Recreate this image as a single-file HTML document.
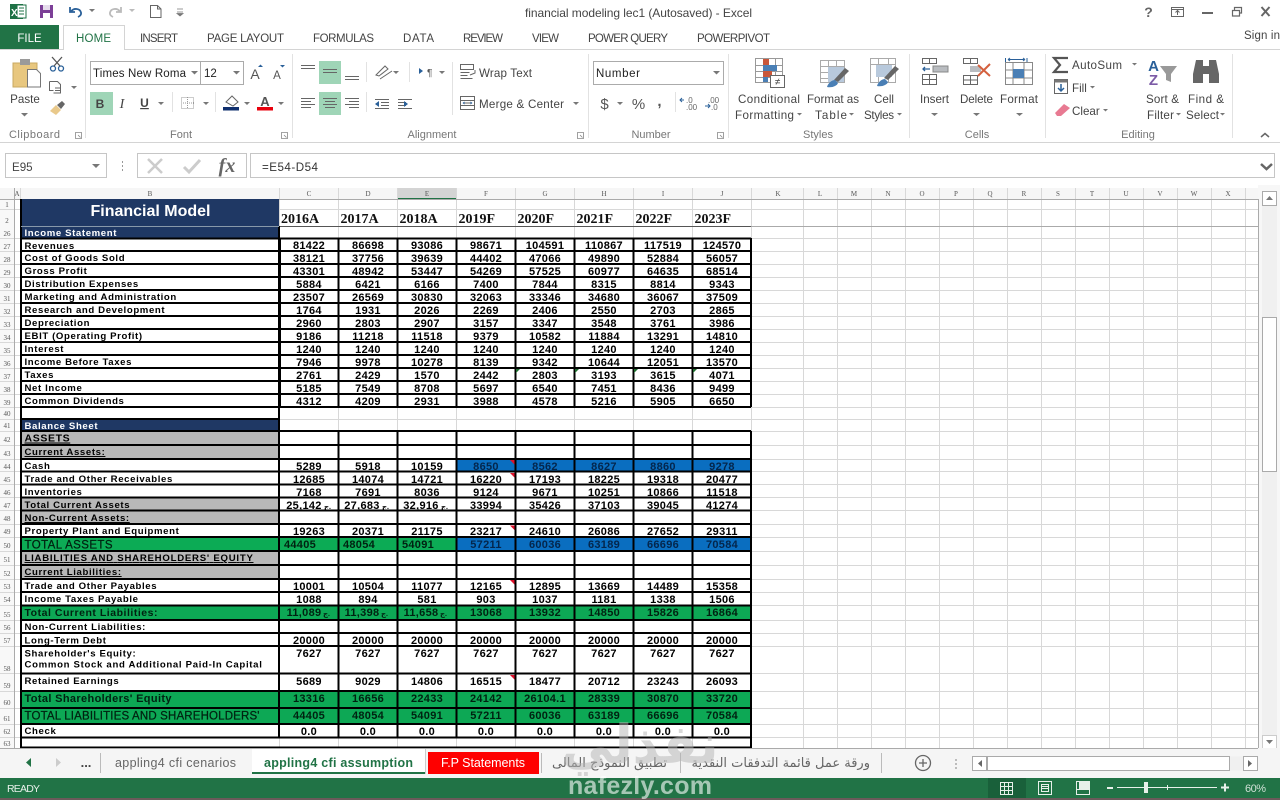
<!DOCTYPE html>
<html><head><meta charset="utf-8"><title>financial modeling lec1 (Autosaved) - Excel</title>
<style>
html,body{margin:0;padding:0;background:#fff;width:1280px;height:800px;overflow:hidden}
svg{display:block;position:absolute;left:0;top:0}
text{font-family:"Liberation Sans","DejaVu Sans",sans-serif;white-space:pre}
.t{font-size:11.5px;fill:#444}
.r{font-size:11.6px;fill:#444}
.g{font-size:11px;fill:#777;text-anchor:middle}
.c{text-anchor:middle}
.hd{font-family:"Liberation Serif",serif;font-size:7px;fill:#555;text-anchor:middle}
.l{font-size:9.6px;font-weight:bold;fill:#000;letter-spacing:.62px}
.n{font-size:11px;font-weight:bold;fill:#000;text-anchor:middle;letter-spacing:.3px}
.y{font-family:"Liberation Serif",serif;font-size:14px;font-weight:bold;fill:#111}
.ic{fill:none;stroke:#666;stroke-width:1}
</style></head><body>
<svg width="1280" height="800" viewBox="0 0 1280 800" xmlns="http://www.w3.org/2000/svg">
<rect width="1280" height="800" fill="#fff"/>

<!-- Quick access bar -->
<rect x="10" y="4" width="13" height="15" fill="#1e7145"/><rect x="17" y="5" width="9" height="13" fill="#fff" stroke="#1e7145"/>
<path d="M19 8h5M19 11h5M19 14h5" stroke="#1e7145"/>
<text x="11" y="16" style="font-size:10px;font-weight:bold;fill:#fff">X</text>
<rect x="40" y="5" width="13" height="13" fill="#7c3f97"/><rect x="43" y="5" width="7" height="5" fill="#e6dcec"/><rect x="43" y="13" width="7" height="5" fill="#fff"/>
<path d="M70 7v5h5M71 11.500c3-4 9-3 10 1 .5 2-1 3.500-3 4.500" fill="none" stroke="#2a6099" stroke-width="1.800"/>
<path d="M89 9l3 3 3-3z" fill="#777"/>
<path d="M121 7v5h-5M120 11.500c-3-4-9-3-10 1-.5 2 1 3.500 3 4.500" fill="none" stroke="#bbb" stroke-width="1.800"/>
<path d="M129 9l3 3 3-3z" fill="#bbb"/>
<path d="M150.500 5.500h7l3.500 3.500v8.500h-10.500z M157.500 5.500v3.500h3.500" fill="#fff" stroke="#666"/>
<path d="M177 9h6M177 12h6M180 16l-3-2.500h6z" stroke="#777" fill="#777" stroke-width=".8"/>
<text x="638.500" y="17" class="c" style="font-size:12px;fill:#444" textLength="227">financial modeling lec1 (Autosaved) - Excel</text>

<!-- Window controls -->
<text x="1148.500" y="17" class="c" style="font-size:14px;font-weight:bold;fill:#666">?</text>
<rect x="1171.500" y="7.500" width="12" height="9" fill="none" stroke="#666"/><path d="M1171.500 9.500h12M1177.500 15v-4M1175.500 12.500l2-2 2 2" fill="none" stroke="#666"/>
<rect x="1202" y="12" width="11" height="2" fill="#666"/>
<path d="M1232.500 10.500h7v5.500h-7zM1234.500 10.500v-3h7v5.500h-2" fill="none" stroke="#666" stroke-width="1.200"/>
<path d="M1261.500 7l8 9M1269.500 7l-8 9" stroke="#666" stroke-width="2"/>

<!-- Tabs -->
<rect x="0" y="25" width="59" height="25" fill="#217346"/>
<text x="29.500" y="42" class="c" style="font-size:11.500px;fill:#fff">FILE</text>
<path d="M0 49.500H1280" stroke="#d4d4d4"/>
<path d="M63.500 50V25.500H124.500V50" fill="#fff" stroke="#d4d4d4"/><rect x="64" y="48" width="60" height="3" fill="#fff"/>
<text x="76" y="42" class="t" style="fill:#217346" textLength="35">HOME</text>
<text x="140" y="42" class="t" textLength="38">INSERT</text>
<text x="207" y="42" class="t" textLength="77">PAGE LAYOUT</text>
<text x="313" y="42" class="t" textLength="61">FORMULAS</text>
<text x="403" y="42" class="t" textLength="31">DATA</text>
<text x="463" y="42" class="t" textLength="40">REVIEW</text>
<text x="532" y="42" class="t" textLength="27">VIEW</text>
<text x="588" y="42" class="t" textLength="80">POWER QUERY</text>
<text x="697" y="42" class="t" textLength="73">POWERPIVOT</text>
<text x="1244" y="39" class="t" textLength="36">Sign in</text>

<!-- Ribbon separators -->
<path d="M85.500 54V138M292.500 54V138M588.500 54V138M728.500 54V138M909.500 54V138M1045.500 54V138M1232.500 54V138" stroke="#e2e2e2"/>
<path d="M172.500 92V112M215.500 92V112M366.500 62V82M366.500 92V112M409.500 62V82M452.500 62V115M675.500 92V112" stroke="#e2e2e2"/>
<path d="M0 142.500H1280" stroke="#d4d4d4"/>

<!-- Clipboard -->
<rect x="13" y="63" width="24" height="24" fill="#e8c77f" stroke="#c9a860"/>
<rect x="20" y="59" width="10" height="6" fill="#9a9a9a"/>
<path d="M27.500 69.500h9l4 4v13.500h-13z" fill="#fff" stroke="#777"/>
<text x="25" y="103" class="c r">Paste</text>
<path d="M21 113l3.500 3.500 3.500-3.500z" fill="#777"/>
<circle cx="53" cy="68.500" r="2.500" fill="none" stroke="#2a6099" stroke-width="1.300"/><circle cx="61" cy="68.500" r="2.500" fill="none" stroke="#2a6099" stroke-width="1.300"/>
<path d="M54 66L62 57M60 66L52 57" stroke="#555" stroke-width="1.300"/>
<path d="M49.500 81.500h8l3 3v8.500h-7M49.500 81.500v9h4" fill="#fff" stroke="#666"/><path d="M55 88h5M55 90.500h5" stroke="#666"/>
<path d="M71 86l3 3 3-3z" fill="#777"/>
<path d="M50 111l6-6 5 5-5 5z" fill="#e9c98b"/><path d="M57 105l5-4 3 3-4 5z" fill="#666"/>
<text x="9" y="138" class="g" style="text-anchor:start" textLength="51">Clipboard</text>
<path d="M75.500 132.500h6v6h-6zM78 135l2.500 2.500" fill="none" stroke="#888" stroke-width=".8"/>

<!-- Font -->
<rect x="90.500" y="61.500" width="110" height="23" fill="#fff" stroke="#ababab"/>
<rect x="200.500" y="61.500" width="43" height="23" fill="#fff" stroke="#ababab"/>
<text x="93" y="77" class="t" style="fill:#222" textLength="93">Times New Roma</text>
<path d="M191 71l3.500 3.500 3.500-3.500z" fill="#777"/>
<text x="204" y="77" class="t" style="fill:#222">12</text>
<path d="M233 71l3.500 3.500 3.500-3.500z" fill="#777"/>
<text x="255" y="79" class="c" style="font-size:14px;fill:#555">A</text><path d="M258 67l2.500-2.500 2.500 2.500z" fill="#2a6099"/>
<text x="277" y="79" class="c" style="font-size:11.500px;fill:#555">A</text><path d="M280 65l2.500 2.500 2.500-2.500z" fill="#2a6099"/>
<rect x="90" y="92" width="23" height="23" fill="#9fd5b7"/>
<text x="100" y="108" class="c" style="font-size:12px;font-weight:bold;fill:#444">B</text>
<text x="122" y="108" class="c" style="font-size:14px;font-style:italic;font-family:'Liberation Serif',serif;fill:#444">I</text>
<text x="144.500" y="107" class="c" style="font-size:12px;font-weight:bold;fill:#444;text-decoration:underline">U</text>
<path d="M158 102l3 3 3-3z" fill="#777"/>
<rect x="181.500" y="97.500" width="12" height="11" fill="none" stroke="#999" stroke-dasharray="1 1"/><path d="M187.500 97v12M181 103h13" stroke="#999" stroke-dasharray="1 1"/>
<path d="M203 102l3 3 3-3z" fill="#777"/>
<path d="M226 102l6-6 6 6-5 4z" fill="#fff" stroke="#666"/><rect x="223" y="107" width="16" height="3.500" fill="#0f2f6e"/>
<path d="M244 102l3 3 3-3z" fill="#777"/>
<text x="265" y="106" class="c" style="font-size:13px;font-weight:bold;fill:#555">A</text><rect x="257" y="107" width="16" height="3.500" fill="#e8000d"/>
<path d="M278 102l3 3 3-3z" fill="#777"/>
<text x="181" y="138" class="g">Font</text>
<path d="M281.500 132.500h6v6h-6zM284 135l2.500 2.500" fill="none" stroke="#888" stroke-width=".8"/>

<!-- Alignment -->
<rect x="319" y="61" width="22" height="23" fill="#9fd5b7"/><rect x="319" y="92" width="22" height="23" fill="#9fd5b7"/>
<path d="M301 65.500h14M301 68.500h14M323 69.500h14M323 72.500h14M345 76.500h14M345 79.500h14" stroke="#666"/>
<path d="M301 98.500h14M301 101.500h10M301 104.500h14M301 107.500h10M323 98.500h14M325 101.500h10M323 104.500h14M325 107.500h10M345 98.500h14M349 101.500h10M345 104.500h14M349 107.500h10" stroke="#666"/>
<path d="M376 75l9-9 3 3-9 7z M380 79l12-8" fill="none" stroke="#666"/><path d="M393 71l3 3 3-3z" fill="#777"/>
<path d="M375 99.500h14M381 102.500h8M381 105.500h8M375 108.500h14" fill="none" stroke="#666"/><path d="M375 104l4-3v6z" fill="#2a6099"/>
<path d="M398 99.500h14M398 102.500h8M398 105.500h8M398 108.500h14" fill="none" stroke="#666"/><path d="M408 104l-4-3v6z" fill="#2a6099"/>
<path d="M419 68l4 3-4 3z" fill="#2a6099"/>
<text x="427" y="76" style="font-size:10px;fill:#555">¶</text><path d="M439 71l3 3 3-3z" fill="#777"/>
<rect x="460.500" y="64.500" width="13" height="5" fill="none" stroke="#666"/><path d="M460.500 72.500h9M460.500 75.500h7M460.500 78.500h12M475 70v3l-5 2" fill="none" stroke="#666"/>
<text x="479" y="77" class="r" textLength="53">Wrap Text</text>
<rect x="460.500" y="96.500" width="14" height="13" fill="none" stroke="#666"/><path d="M460.500 100.500h14M460.500 105.500h14M464 103h7" stroke="#666"/><path d="M462.500 103l2-1.500v3zM472.500 103l-2-1.500v3z" fill="#2a6099"/>
<text x="479" y="108" class="r" textLength="85">Merge &amp; Center</text>
<path d="M573 102l3 3 3-3z" fill="#777"/>
<text x="432" y="138" class="g">Alignment</text>
<path d="M577.500 132.500h6v6h-6zM580 135l2.500 2.500" fill="none" stroke="#888" stroke-width=".8"/>

<!-- Number -->
<rect x="593.500" y="61.500" width="130" height="23" fill="#fff" stroke="#ababab"/>
<text x="596" y="77" class="t" style="fill:#222" textLength="44">Number</text>
<path d="M713 71l3.500 3.500 3.500-3.500z" fill="#777"/>
<text x="604.500" y="109" class="c" style="font-size:15px;fill:#555">$</text>
<path d="M617 102l3 3 3-3z" fill="#777"/>
<text x="638.500" y="109" class="c" style="font-size:15px;fill:#555">%</text>
<text x="659.500" y="106" class="c" style="font-size:15px;font-weight:bold;fill:#555">,</text>
<text x="686" y="103" style="font-size:8px;fill:#666">.0</text><text x="686" y="110" style="font-size:8px;fill:#666">.00</text>
<path d="M684 100h-4M682 98l-2 2 2 2" fill="none" stroke="#2a6099"/>
<text x="708" y="103" style="font-size:8px;fill:#666">.00</text><text x="711" y="110" style="font-size:8px;fill:#666">.0</text>
<path d="M705 106h5M708 104l2 2-2 2" fill="none" stroke="#2a6099"/>
<text x="651" y="138" class="g">Number</text>
<path d="M717.500 132.500h6v6h-6zM720 135l2.500 2.500" fill="none" stroke="#888" stroke-width=".8"/>

<!-- Styles -->
<path d="M755.500 58.500h27v24h-27zM755.500 65.500h27M755.500 71.500h27M755.500 77.500h27M763.500 58.500v24M775.500 58.500v24" fill="#fff" stroke="#999"/>
<rect x="763" y="59" width="6" height="6" fill="#c9573a"/><rect x="763" y="65" width="14" height="6" fill="#4a7fb5"/><rect x="763" y="71" width="9" height="6" fill="#c9573a"/><rect x="763" y="77" width="5" height="5" fill="#4a7fb5"/>
<rect x="770.500" y="75.500" width="14" height="12" fill="#fff" stroke="#666"/>
<text x="777.500" y="85" class="c" style="font-size:10px;fill:#444">≠</text>
<text x="738" y="103" class="r" textLength="62">Conditional</text>
<text x="735" y="119" class="r" textLength="59">Formatting</text><path d="M797 113l2.500 2.500 2.500-2.500z" fill="#777"/>
<path d="M820.500 60.500h24v22h-24zM820.500 66.500h24M820.500 72.500h24M820.500 78.500h24M828.500 60.500v22M836.500 60.500v22" fill="#fff" stroke="#aaa"/>
<rect x="828" y="67" width="16" height="15" fill="#b8c9dc"/>
<path d="M834 80l11-12 4 3-11 11z" fill="#666"/><path d="M827 87c1-4 5-7 8-7l3 3c-1 3-6 5-11 4z" fill="#4a7fb5"/>
<text x="807" y="103" class="r" textLength="52">Format as</text>
<text x="815" y="119" class="r" textLength="32">Table</text><path d="M849 113l2.500 2.500 2.500-2.500z" fill="#777"/>
<path d="M870.500 58.500h25v24h-25zM870.500 64.500h25M878.500 58.500v24M888.500 58.500v24" fill="#fff" stroke="#aaa"/>
<rect x="876" y="65" width="16" height="12" fill="#b8c9dc"/>
<path d="M884 78l11-12 4 3-11 11z" fill="#666"/><path d="M877 86c1-4 5-7 8-7l3 3c-1 3-6 5-11 4z" fill="#4a7fb5"/>
<text x="874" y="103" class="r" textLength="20">Cell</text>
<text x="864" y="119" class="r" textLength="30">Styles</text><path d="M897 113l2.500 2.500 2.500-2.500z" fill="#777"/>
<text x="818" y="138" class="g">Styles</text>

<!-- Cells -->
<path d="M922.500 58.500h14v5h-14zM929.500 58.500v5M922.500 74.500h14v10h-14zM922.500 79.500h14M929.500 74.500v10" fill="none" stroke="#666"/>
<rect x="933" y="66" width="15" height="6" fill="#b9bcc0" stroke="#888"/>
<path d="M930 69h-7M925 67l-2 2 2 2" fill="none" stroke="#2a6099" stroke-width="1.300"/>
<text x="934.500" y="103" class="c r" textLength="29">Insert</text><path d="M931 113l3.500 3 3.500-3z" fill="#777"/>
<path d="M963.500 58.500h14v5h-14zM970.500 58.500v5M963.500 75.500h14v9h-14zM963.500 80h14M970.500 75.500v9" fill="none" stroke="#666"/>
<rect x="970" y="66" width="11" height="6" fill="#b9bcc0"/>
<path d="M978 65l12 11M990 64l-12 12" stroke="#d4603e" stroke-width="2"/>
<text x="976.500" y="103" class="c r" textLength="33">Delete</text><path d="M973 113l3.500 3 3.500-3z" fill="#777"/>
<path d="M1005.500 62.500h27v22h-27zM1005.500 70h27M1005.500 78h27M1013 62.500v22M1024 62.500v22" fill="#fff" stroke="#888"/>
<rect x="1013" y="69" width="11" height="9" fill="#4a7fb5"/>
<path d="M1005.500 58v4M1027 58v4M1008 59.500h16M1008 59.500l2-1.500M1008 59.500l2 1.500M1025 59.500l-2-1.500M1025 59.500l-2 1.500" fill="none" stroke="#2a6099"/>
<text x="1019" y="103" class="c r" textLength="38">Format</text><path d="M1016 113l3.500 3 3.500-3z" fill="#777"/>
<text x="977" y="138" class="g">Cells</text>

<!-- Editing -->
<path d="M1068 58h-14l6 7-6 7h14" fill="none" stroke="#555" stroke-width="2.200"/>
<text x="1072" y="69" class="r" textLength="50">AutoSum</text><path d="M1132 63l2.500 2.500 2.500-2.500z" fill="#777"/>
<rect x="1054.500" y="79.500" width="13" height="14" fill="#fff" stroke="#666"/><rect x="1054.500" y="79.500" width="13" height="3" fill="#777"/>
<path d="M1061 84v7M1058 88l3 3 3-3" fill="none" stroke="#2a6099" stroke-width="1.500"/>
<text x="1072" y="92" class="r">Fill</text><path d="M1090 86l2.500 2.500 2.500-2.500z" fill="#777"/>
<path d="M1055 113l9-9 6 4-9 8h-4z" fill="#e87a92"/>
<text x="1072" y="115" class="r">Clear</text><path d="M1103 109l2.500 2.500 2.500-2.500z" fill="#777"/>
<text x="1153.500" y="71" class="c" style="font-size:15px;font-weight:bold;fill:#2a6099">A</text>
<text x="1153.500" y="85" class="c" style="font-size:15px;font-weight:bold;fill:#7c5ba6">Z</text>
<path d="M1160 66h17l-6 8v8l-5-2v-6z" fill="#999"/>
<text x="1146" y="103" class="r" textLength="33">Sort &amp;</text>
<text x="1147" y="119" class="r" textLength="27">Filter</text><path d="M1176 113l2.500 2.500 2.500-2.500z" fill="#777"/>
<path d="M1193 83v-9l3-14h7v23zM1219 83v-9l-3-14h-7v23z" fill="#666"/><rect x="1203" y="66" width="6" height="8" fill="#666"/>
<text x="1188" y="103" class="r" textLength="36">Find &amp;</text>
<text x="1186" y="119" class="r" textLength="33">Select</text><path d="M1220 113l2.500 2.500 2.500-2.500z" fill="#777"/>
<text x="1138" y="138" class="g">Editing</text>
<path d="M1261 137l4-3.500 4 3.500" fill="none" stroke="#666" stroke-width="1.500"/>

<!-- Formula bar -->
<rect x="5.500" y="153.500" width="101" height="24" fill="#fff" stroke="#c6c6c6"/>
<text x="12" y="171" class="r">E95</text>
<path d="M92 164h8l-4 4z" fill="#777"/>
<path d="M122.500 161v2M122.500 165v2M122.500 169v2" stroke="#999"/>
<rect x="137.500" y="153.500" width="109" height="24" fill="#fff" stroke="#c6c6c6"/>
<path d="M148 159l14 14M162 159l-14 14" stroke="#ccc" stroke-width="2.500"/>
<path d="M184 167l5 5 11-12" fill="none" stroke="#ccc" stroke-width="3"/>
<text x="227" y="172" class="c" style="font-family:'Liberation Serif',serif;font-style:italic;font-weight:bold;font-size:20px;fill:#666">fx</text>
<rect x="250.500" y="153.500" width="1024" height="24" fill="#fff" stroke="#c6c6c6"/>
<text x="262" y="171" class="r" style="fill:#333" textLength="56">=E54-D54</text>
<path d="M1261 164l5.500 5 5.500-5" fill="none" stroke="#666" stroke-width="2.500"/>

<!-- Grid background -->
<rect x="0" y="188" width="1258" height="11" fill="#f6f6f6"/>
<rect x="0" y="199" width="14" height="549" fill="#f8f8f8"/>
<rect x="397" y="188" width="59" height="11" fill="#d4d4d4"/>
<rect x="397" y="198" width="59" height="2" fill="#217346"/>
<rect x="1258" y="185" width="22" height="563" fill="#f7f7f7"/>

<!-- Gridlines -->
<path fill="none" stroke="#d8d8d8" d="M0 209.500H1258M0 238.500H1258M0 251.500H1258M0 264.500H1258M0 277.500H1258M0 290.500H1258M0 303.500H1258M0 316.500H1258M0 329.500H1258M0 342.500H1258M0 355.500H1258M0 368.500H1258M0 381.500H1258M0 394.500H1258M0 407.500H1258M0 419.500H1258M0 431.500H1258M0 445.500H1258M0 459.500H1258M0 471.500H1258M0 484.500H1258M0 497.500H1258M0 510.500H1258M0 524.500H1258M0 537.500H1258M0 551.500H1258M0 565.500H1258M0 579.500H1258M0 592.500H1258M0 605.500H1258M0 620.500H1258M0 633.500H1258M0 646.500H1258M0 673.500H1258M0 691.500H1258M0 708.500H1258M0 724.500H1258M0 737.500H1258"/>
<path fill="none" stroke="#d8d8d8" d="M20.500 188V748M279.500 188V748M338.500 188V748M397.500 188V748M456.500 188V748M515.500 188V748M574.500 188V748M633.500 188V748M692.500 188V748M751.500 188V748M803.500 188V748M837.500 188V748M871.500 188V748M905.500 188V748M939.500 188V748M973.500 188V748M1007.500 188V748M1041.500 188V748M1075.500 188V748M1109.500 188V748M1143.500 188V748M1177.500 188V748M1211.500 188V748M1245.500 188V748"/>
<path fill="none" stroke="#aaa" d="M0 199.500H1258M14.500 188V748M1258.500 199V748M751 226.500H1258"/>
<path fill="none" stroke="#555" d="M280 226.500H751"/>

<!-- Column headers -->
<text y="196" class="hd"><tspan x="17">A</tspan><tspan x="150">B</tspan><tspan x="309">C</tspan><tspan x="368">D</tspan><tspan x="427">E</tspan><tspan x="486">F</tspan><tspan x="545">G</tspan><tspan x="604">H</tspan><tspan x="663">I</tspan><tspan x="722">J</tspan><tspan x="778">K</tspan><tspan x="820">L</tspan><tspan x="854">M</tspan><tspan x="888">N</tspan><tspan x="922">O</tspan><tspan x="956">P</tspan><tspan x="990">Q</tspan><tspan x="1024">R</tspan><tspan x="1058">S</tspan><tspan x="1092">T</tspan><tspan x="1126">U</tspan><tspan x="1160">V</tspan><tspan x="1194">W</tspan><tspan x="1228">X</tspan></text>

<!-- Row headers -->
<g class="hd"><text x="7" y="207" class="hd">1</text><text x="7" y="223" class="hd">2</text><text x="7" y="236" class="hd">26</text><text x="7" y="249" class="hd">27</text><text x="7" y="262" class="hd">28</text><text x="7" y="275" class="hd">29</text><text x="7" y="288" class="hd">30</text><text x="7" y="301" class="hd">31</text><text x="7" y="314" class="hd">32</text><text x="7" y="327" class="hd">33</text><text x="7" y="340" class="hd">34</text><text x="7" y="353" class="hd">35</text><text x="7" y="366" class="hd">36</text><text x="7" y="379" class="hd">37</text><text x="7" y="392" class="hd">38</text><text x="7" y="405" class="hd">39</text><text x="7" y="416" class="hd">40</text><text x="7" y="428" class="hd">41</text><text x="7" y="442" class="hd">42</text><text x="7" y="456" class="hd">43</text><text x="7" y="469" class="hd">44</text><text x="7" y="482" class="hd">45</text><text x="7" y="495" class="hd">46</text><text x="7" y="508" class="hd">47</text><text x="7" y="521" class="hd">48</text><text x="7" y="534" class="hd">49</text><text x="7" y="548" class="hd">50</text><text x="7" y="562" class="hd">51</text><text x="7" y="576" class="hd">52</text><text x="7" y="589" class="hd">53</text><text x="7" y="602" class="hd">54</text><text x="7" y="617" class="hd">55</text><text x="7" y="630" class="hd">56</text><text x="7" y="643" class="hd">57</text><text x="7" y="671" class="hd">58</text><text x="7" y="688" class="hd">59</text><text x="7" y="705" class="hd">60</text><text x="7" y="721" class="hd">61</text><text x="7" y="734" class="hd">62</text><text x="7" y="746" class="hd">63</text></g>

<!-- Cell fills -->
<rect x="21" y="199" width="258" height="27" fill="#1f3864"/>
<rect x="21" y="227" width="258" height="11" fill="#1f3864"/>
<rect x="21" y="238" width="258" height="169" fill="#fff"/>
<rect x="280" y="238" width="471" height="169" fill="#fff"/>
<rect x="21" y="407" width="258" height="12" fill="#fff"/>
<rect x="21" y="419" width="258" height="12" fill="#1f3864"/>
<rect x="21" y="431" width="258" height="307" fill="#fff"/>
<rect x="280" y="431" width="471" height="307" fill="#fff"/>
<g fill="#b8b8b8"><rect x="21" y="431" width="258" height="28"/><rect x="21" y="498" width="258" height="26"/><rect x="21" y="551" width="258" height="28"/></g>
<rect x="21" y="537" width="435" height="14" fill="#0cab55"/>
<rect x="456" y="537" width="295" height="14" fill="#0a6ec0"/>
<rect x="456" y="459" width="295" height="12" fill="#0a6ec0"/>
<rect x="21" y="605" width="730" height="15" fill="#0da855"/>
<rect x="21" y="691" width="730" height="33" fill="#0da855"/>

<!-- Black borders -->
<g fill="none" stroke="#000" stroke-width="2">
<path d="M21 199V748M279 226V738"/>
<path d="M280 238V407M338.500 238V407M397.500 238V407M456.500 238V407M515.500 238V407M574.500 238V407M633.500 238V407M692.500 238V407M751 238V407"/>
<path d="M21 238.500H751M21 251H751M21 264H751M21 277H751M21 290H751M21 303H751M21 316H751M21 329H751M21 342H751M21 355H751M21 368H751M21 381H751M21 394H751M21 407H751"/>
<path d="M21 419H279M21 431H751M21 445H751M21 459H751M21 471.500H751M21 484.500H751M21 497.500H751M21 510.500H751M21 524H751M21 537H751M21 551H751M21 565H751M21 579H751M21 592H751M21 605.500H751M21 620H751M21 633H751M21 646H751M21 673.500H751M21 691H751M21 708H751M21 724H751M21 737.500H751M21 747.500H751"/>
<path d="M338.500 431V738M397.500 431V738M456.500 431V738M515.500 431V738M574.500 431V738M633.500 431V738M692.500 431V738M751 431V748"/>
</g>
<path d="M21 226.500H279" stroke="#8899aa"/>

<!-- Comment/error triangles -->
<g fill="#1d6b2d"><path d="M516 369h4l-4 4zM575 369h4l-4 4zM634 369h4l-4 4zM693 369h4l-4 4z"/></g>
<g fill="#e0102a"><path d="M510 460h4.500v4.500zM510 473h4.500v4.500zM510 525.500h4.500v4.500zM510 580h4.500v4.500zM510 675h4.500v4.500z"/></g>

<!-- Headings -->
<text x="150.500" y="216" class="c" style="font-size:16px;font-weight:bold;fill:#fff">Financial Model</text>
<text y="223" class="y"><tspan x="281">2016A</tspan><tspan x="340.500">2017A</tspan><tspan x="399.500">2018A</tspan><tspan x="458.500">2019F</tspan><tspan x="517.500">2020F</tspan><tspan x="576.500">2021F</tspan><tspan x="635.500">2022F</tspan><tspan x="694.500">2023F</tspan></text>

<!-- Labels -->
<text x="24.500" y="236" class="l" style="fill:#fff">Income Statement</text>
<text x="24.500" y="249" class="l">Revenues</text>
<text x="24.500" y="261" class="l">Cost of Goods Sold</text>
<text x="24.500" y="274" class="l">Gross Profit</text>
<text x="24.500" y="287" class="l">Distribution Expenses</text>
<text x="24.500" y="300" class="l">Marketing and Administration</text>
<text x="24.500" y="313" class="l">Research and Development</text>
<text x="24.500" y="326" class="l">Depreciation</text>
<text x="24.500" y="339" class="l">EBIT (Operating Profit)</text>
<text x="24.500" y="352" class="l">Interest</text>
<text x="24.500" y="365" class="l">Income Before Taxes</text>
<text x="24.500" y="378" class="l">Taxes</text>
<text x="24.500" y="391" class="l">Net Income</text>
<text x="24.500" y="404" class="l">Common Dividends</text>
<text x="24.500" y="429" class="l" style="fill:#fff">Balance Sheet</text>
<text x="24.500" y="441.500" class="l" style="font-size:10.500px;text-decoration:underline">ASSETS</text>
<text x="24.500" y="455" class="l" style="text-decoration:underline">Current Assets:</text>
<text x="24.500" y="469" class="l">Cash</text>
<text x="24.500" y="482" class="l">Trade and Other Receivables</text>
<text x="24.500" y="495" class="l">Inventories</text>
<text x="24.500" y="508" class="l">Total Current Assets</text>
<text x="24.500" y="521" class="l" style="text-decoration:underline">Non-Current Assets:</text>
<text x="24.500" y="534" class="l">Property Plant and Equipment</text>
<text x="24.500" y="548.500" textLength="88" style="font-size:11.500px;fill:#021;stroke:#021;stroke-width:.25px">TOTAL ASSETS</text>
<text x="24.500" y="561" class="l" style="text-decoration:underline" textLength="229">LIABILITIES AND SHAREHOLDERS' EQUITY</text>
<text x="24.500" y="575" class="l" style="text-decoration:underline">Current Liabilities:</text>
<text x="24.500" y="589" class="l">Trade and Other Payables</text>
<text x="24.500" y="602" class="l">Income Taxes Payable</text>
<text x="24.500" y="616" textLength="133" style="font-size:10.500px;font-weight:bold;fill:#021">Total Current Liabilities:</text>
<text x="24.500" y="630" class="l">Non-Current Liabilities:</text>
<text x="24.500" y="643.500" class="l">Long-Term Debt</text>
<text x="24.500" y="656.500" class="l">Shareholder's Equity:</text>
<text x="24.500" y="667.500" class="l" textLength="238">Common Stock and Additional Paid-In Capital</text>
<text x="24.500" y="684" class="l">Retained Earnings</text>
<text x="24.500" y="702" textLength="147" style="font-size:11px;font-weight:bold;fill:#021">Total Shareholders' Equity</text>
<text x="24.500" y="719.500" textLength="235" style="font-size:11.500px;fill:#021;stroke:#021;stroke-width:.25px">TOTAL LIABILITIES AND SHAREHOLDERS'</text>
<text x="24.500" y="734" class="l">Check</text>

<!-- Numbers -->
<text y="249" class="n"><tspan x="309">81422</tspan><tspan x="368">86698</tspan><tspan x="427">93086</tspan><tspan x="486">98671</tspan><tspan x="545">104591</tspan><tspan x="604">110867</tspan><tspan x="663">117519</tspan><tspan x="722">124570</tspan></text>
<text y="262" class="n"><tspan x="309">38121</tspan><tspan x="368">37756</tspan><tspan x="427">39639</tspan><tspan x="486">44402</tspan><tspan x="545">47066</tspan><tspan x="604">49890</tspan><tspan x="663">52884</tspan><tspan x="722">56057</tspan></text>
<text y="275" class="n"><tspan x="309">43301</tspan><tspan x="368">48942</tspan><tspan x="427">53447</tspan><tspan x="486">54269</tspan><tspan x="545">57525</tspan><tspan x="604">60977</tspan><tspan x="663">64635</tspan><tspan x="722">68514</tspan></text>
<text y="288" class="n"><tspan x="309">5884</tspan><tspan x="368">6421</tspan><tspan x="427">6166</tspan><tspan x="486">7400</tspan><tspan x="545">7844</tspan><tspan x="604">8315</tspan><tspan x="663">8814</tspan><tspan x="722">9343</tspan></text>
<text y="301" class="n"><tspan x="309">23507</tspan><tspan x="368">26569</tspan><tspan x="427">30830</tspan><tspan x="486">32063</tspan><tspan x="545">33346</tspan><tspan x="604">34680</tspan><tspan x="663">36067</tspan><tspan x="722">37509</tspan></text>
<text y="314" class="n"><tspan x="309">1764</tspan><tspan x="368">1931</tspan><tspan x="427">2026</tspan><tspan x="486">2269</tspan><tspan x="545">2406</tspan><tspan x="604">2550</tspan><tspan x="663">2703</tspan><tspan x="722">2865</tspan></text>
<text y="327" class="n"><tspan x="309">2960</tspan><tspan x="368">2803</tspan><tspan x="427">2907</tspan><tspan x="486">3157</tspan><tspan x="545">3347</tspan><tspan x="604">3548</tspan><tspan x="663">3761</tspan><tspan x="722">3986</tspan></text>
<text y="340" class="n"><tspan x="309">9186</tspan><tspan x="368">11218</tspan><tspan x="427">11518</tspan><tspan x="486">9379</tspan><tspan x="545">10582</tspan><tspan x="604">11884</tspan><tspan x="663">13291</tspan><tspan x="722">14810</tspan></text>
<text y="353" class="n"><tspan x="309">1240</tspan><tspan x="368">1240</tspan><tspan x="427">1240</tspan><tspan x="486">1240</tspan><tspan x="545">1240</tspan><tspan x="604">1240</tspan><tspan x="663">1240</tspan><tspan x="722">1240</tspan></text>
<text y="366" class="n"><tspan x="309">7946</tspan><tspan x="368">9978</tspan><tspan x="427">10278</tspan><tspan x="486">8139</tspan><tspan x="545">9342</tspan><tspan x="604">10644</tspan><tspan x="663">12051</tspan><tspan x="722">13570</tspan></text>
<text y="379" class="n"><tspan x="309">2761</tspan><tspan x="368">2429</tspan><tspan x="427">1570</tspan><tspan x="486">2442</tspan><tspan x="545">2803</tspan><tspan x="604">3193</tspan><tspan x="663">3615</tspan><tspan x="722">4071</tspan></text>
<text y="392" class="n"><tspan x="309">5185</tspan><tspan x="368">7549</tspan><tspan x="427">8708</tspan><tspan x="486">5697</tspan><tspan x="545">6540</tspan><tspan x="604">7451</tspan><tspan x="663">8436</tspan><tspan x="722">9499</tspan></text>
<text y="405" class="n"><tspan x="309">4312</tspan><tspan x="368">4209</tspan><tspan x="427">2931</tspan><tspan x="486">3988</tspan><tspan x="545">4578</tspan><tspan x="604">5216</tspan><tspan x="663">5905</tspan><tspan x="722">6650</tspan></text>

<text y="470" class="n"><tspan x="309">5289</tspan><tspan x="368">5918</tspan><tspan x="427">10159</tspan><tspan x="486" style="fill:#04264c">8650</tspan><tspan x="545" style="fill:#04264c">8562</tspan><tspan x="604" style="fill:#04264c">8627</tspan><tspan x="663" style="fill:#04264c">8860</tspan><tspan x="722" style="fill:#04264c">9278</tspan></text>
<text y="483" class="n"><tspan x="309">12685</tspan><tspan x="368">14074</tspan><tspan x="427">14721</tspan><tspan x="486">16220</tspan><tspan x="545">17193</tspan><tspan x="604">18225</tspan><tspan x="663">19318</tspan><tspan x="722">20477</tspan></text>
<text y="496" class="n"><tspan x="309">7168</tspan><tspan x="368">7691</tspan><tspan x="427">8036</tspan><tspan x="486">9124</tspan><tspan x="545">9671</tspan><tspan x="604">10251</tspan><tspan x="663">10866</tspan><tspan x="722">11518</tspan></text>
<text y="509" class="n"><tspan x="304">25,142</tspan><tspan x="362">27,683</tspan><tspan x="421">32,916</tspan><tspan x="486">33994</tspan><tspan x="545">35426</tspan><tspan x="604">37103</tspan><tspan x="663">39045</tspan><tspan x="722">41274</tspan></text>
<text y="535" class="n"><tspan x="309">19263</tspan><tspan x="368">20371</tspan><tspan x="427">21175</tspan><tspan x="486">23217</tspan><tspan x="545">24610</tspan><tspan x="604">26086</tspan><tspan x="663">27652</tspan><tspan x="722">29311</tspan></text>
<text y="548" class="n"><tspan x="300" style="fill:#021">44405</tspan><tspan x="359" style="fill:#021">48054</tspan><tspan x="418" style="fill:#021">54091</tspan><tspan x="486" style="fill:#04264c">57211</tspan><tspan x="545" style="fill:#04264c">60036</tspan><tspan x="604" style="fill:#04264c">63189</tspan><tspan x="663" style="fill:#04264c">66696</tspan><tspan x="722" style="fill:#04264c">70584</tspan></text>
<text y="590" class="n"><tspan x="309">10001</tspan><tspan x="368">10504</tspan><tspan x="427">11077</tspan><tspan x="486">12165</tspan><tspan x="545">12895</tspan><tspan x="604">13669</tspan><tspan x="663">14489</tspan><tspan x="722">15358</tspan></text>
<text y="603" class="n"><tspan x="309">1088</tspan><tspan x="368">894</tspan><tspan x="427">581</tspan><tspan x="486">903</tspan><tspan x="545">1037</tspan><tspan x="604">1181</tspan><tspan x="663">1338</tspan><tspan x="722">1506</tspan></text>
<text y="616" class="n" style="fill:#021"><tspan x="304">11,089</tspan><tspan x="362">11,398</tspan><tspan x="421">11,658</tspan><tspan x="486">13068</tspan><tspan x="545">13932</tspan><tspan x="604">14850</tspan><tspan x="663">15826</tspan><tspan x="722">16864</tspan></text>
<text y="644" class="n"><tspan x="309">20000</tspan><tspan x="368">20000</tspan><tspan x="427">20000</tspan><tspan x="486">20000</tspan><tspan x="545">20000</tspan><tspan x="604">20000</tspan><tspan x="663">20000</tspan><tspan x="722">20000</tspan></text>
<text y="657" class="n"><tspan x="309">7627</tspan><tspan x="368">7627</tspan><tspan x="427">7627</tspan><tspan x="486">7627</tspan><tspan x="545">7627</tspan><tspan x="604">7627</tspan><tspan x="663">7627</tspan><tspan x="722">7627</tspan></text>
<text y="685" class="n"><tspan x="309">5689</tspan><tspan x="368">9029</tspan><tspan x="427">14806</tspan><tspan x="486">16515</tspan><tspan x="545">18477</tspan><tspan x="604">20712</tspan><tspan x="663">23243</tspan><tspan x="722">26093</tspan></text>
<text y="702" class="n" style="fill:#021"><tspan x="309">13316</tspan><tspan x="368">16656</tspan><tspan x="427">22433</tspan><tspan x="486">24142</tspan><tspan x="545">26104.1</tspan><tspan x="604">28339</tspan><tspan x="663">30870</tspan><tspan x="722">33720</tspan></text>
<text y="719" class="n" style="fill:#021"><tspan x="309">44405</tspan><tspan x="368">48054</tspan><tspan x="427">54091</tspan><tspan x="486">57211</tspan><tspan x="545">60036</tspan><tspan x="604">63189</tspan><tspan x="663">66696</tspan><tspan x="722">70584</tspan></text>
<text y="735" class="n"><tspan x="309">0.0</tspan><tspan x="368">0.0</tspan><tspan x="427">0.0</tspan><tspan x="486">0.0</tspan><tspan x="545">0.0</tspan><tspan x="604">0.0</tspan><tspan x="663">0.0</tspan><tspan x="722">0.0</tspan></text>
<text y="509" style="font-size:7px;font-weight:bold;fill:#000"><tspan x="324">ج.</tspan><tspan x="382">ج.</tspan><tspan x="441">ج.</tspan></text>
<text y="616" style="font-size:7px;font-weight:bold;fill:#021"><tspan x="323">ج.</tspan><tspan x="381">ج.</tspan><tspan x="440">ج.</tspan></text>

<!-- Scrollbar -->
<rect x="1262" y="205" width="15" height="530" fill="#f0f0f0"/>
<rect x="1262.500" y="191.500" width="14" height="14" fill="#fff" stroke="#aaa"/><path d="M1266 200l3.500-4 3.500 4z" fill="#777"/>
<rect x="1262.500" y="317.500" width="14" height="154" fill="#fff" stroke="#aaa"/>
<rect x="1262.500" y="735.500" width="14" height="13" fill="#fff" stroke="#ccc"/><path d="M1266 740l3.500 4 3.500-4z" fill="#777"/>

<!-- Sheet tabs bar -->
<rect x="0" y="748" width="1280" height="30" fill="#f5f5f5"/>
<path d="M0 748.500H1258" stroke="#aaa"/>
<path d="M31 758v9l-5-4.500z" fill="#217346"/>
<path d="M56 758v9l5-4.500z" fill="#ccc"/>
<text x="86" y="767" class="c" style="font-size:13px;font-weight:bold;fill:#444">...</text>
<path d="M100.500 753V773M541.500 753V773M680.500 753V773M881.500 753V773" stroke="#bbb"/>
<text x="115" y="767" style="font-size:12.500px;fill:#666" textLength="121">appling4 cfi cenarios</text>
<rect x="252" y="749" width="174" height="25" fill="#fff"/>
<rect x="252" y="772" width="174" height="2" fill="#217346"/>
<path d="M425.500 749V774" stroke="#ccc"/>
<text x="264" y="767" style="font-size:12.500px;font-weight:bold;fill:#217346" textLength="149">appling4 cfi assumption</text>
<rect x="428" y="752" width="111" height="22" fill="#fe0000"/>
<text x="441" y="767" style="font-size:12.500px;fill:#fff" textLength="84">F.P Statements</text>
<text x="667" y="767" style="font-family:'DejaVu Sans',sans-serif;font-size:13px;fill:#666" direction="rtl" unicode-bidi="embed">تطبيق النموذج المالى</text>
<text x="870" y="767" style="font-family:'DejaVu Sans',sans-serif;font-size:13px;fill:#666" direction="rtl" unicode-bidi="embed">ورقة عمل قائمة التدفقات النقدية</text>
<circle cx="923" cy="763" r="7.500" fill="none" stroke="#666" stroke-width="1.300"/><path d="M919 763h8M923 759v8" stroke="#666" stroke-width="1.300"/>
<path d="M956 759v2M956 763v2M956 767v2" stroke="#aaa" stroke-width="1.500"/>
<rect x="972.500" y="756.500" width="285" height="14" fill="#f0f0f0"/>
<rect x="972.500" y="756.500" width="14" height="14" fill="#fff" stroke="#aaa"/><path d="M982 760v7l-4-3.500z" fill="#666"/>
<rect x="987.500" y="756.500" width="242" height="14" fill="#fff" stroke="#aaa"/>
<rect x="1243.500" y="756.500" width="14" height="14" fill="#fff" stroke="#aaa"/><path d="M1248 760v7l4-3.500z" fill="#666"/>

<!-- Status bar -->
<rect x="0" y="778" width="1280" height="20" fill="#217346"/>
<rect x="0" y="798" width="1280" height="2" fill="#6b5a5a"/>
<text x="7" y="792" style="font-size:10.500px;fill:#e8f0ea" textLength="33">READY</text>
<rect x="988" y="778" width="38" height="20" fill="#19603a"/>
<path d="M1000.500 782.500h12v12h-12zM1000.500 786.500h12M1000.500 790.500h12M1004.500 782.500v12M1008.500 782.500v12" fill="none" stroke="#e8f0ea"/>
<path d="M1038.500 781.500h13v13h-13zM1041.500 784.500h7v7h-7zM1042 786.500h6M1042 788.500h6" fill="none" stroke="#e8f0ea"/>
<path d="M1076.500 781.500h13v13h-13zM1082.500 781.500v8h-6M1082.500 789.500h7" fill="none" stroke="#e8f0ea"/>
<rect x="1079" y="782" width="3" height="7" fill="#e8f0ea"/><rect x="1083" y="782" width="6" height="7" fill="#e8f0ea"/>
<rect x="1107" y="787" width="6" height="2" fill="#e8f0ea"/>
<path d="M1117 787.500H1217M1167.500 785V790" stroke="#e8f0ea"/>
<rect x="1144" y="782" width="4" height="11" fill="#e8f0ea"/>
<path d="M1221 787.500h8M1225 783.500v8" stroke="#e8f0ea" stroke-width="2"/>
<text x="1245" y="792" style="font-size:11px;fill:#cfe0d5" textLength="21">60%</text>

<!-- Watermark -->
<text transform="translate(640 763) scale(.95 1)" class="c" style="font-family:'DejaVu Sans',sans-serif;font-size:54px;font-weight:bold;fill:#b4b4b4;opacity:.5" direction="rtl">نفذلي</text>
<text x="640" y="794" class="c" style="font-size:25px;font-weight:bold;fill:#fff;opacity:.6" textLength="144">nafezly.com</text>
</svg>
</body></html>
